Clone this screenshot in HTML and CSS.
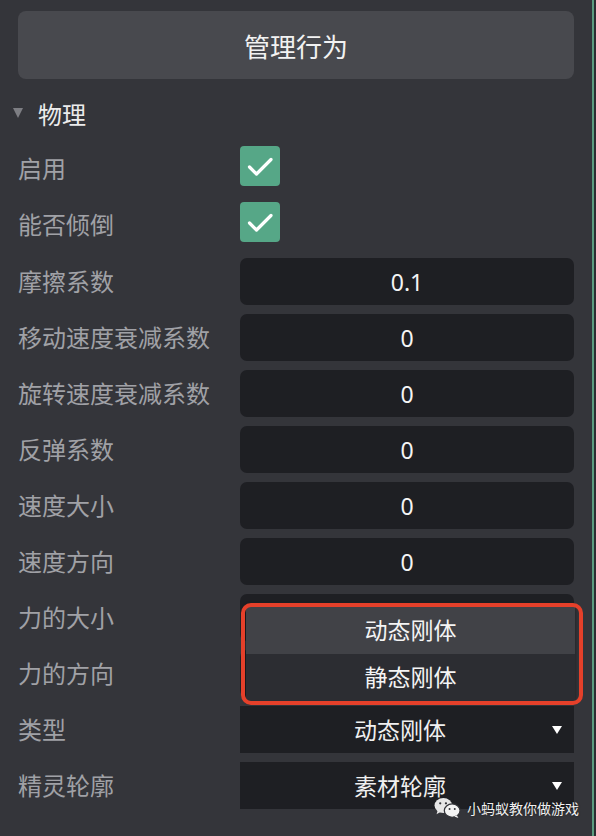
FILE: index.html
```html
<!DOCTYPE html>
<html lang="zh">
<head>
<meta charset="utf-8">
<link rel="stylesheet" href="styles.css">
</head>
<body>
<div class="frame">
  <div class="panel">
    <button class="manage">管理行为</button>
    <div class="section-head"><span class="caret"></span><span>物理</span></div>
    <div class="rows">
      <div class="row check-row"><div class="label">启用</div><div class="field"><span class="checkbox"><svg viewBox="0 0 40 40"><path d="M9.5 21 L16.5 28 L31 13.5"/></svg></span></div></div>
      <div class="row check-row"><div class="label">能否倾倒</div><div class="field"><span class="checkbox"><svg viewBox="0 0 40 40"><path d="M9.5 21 L16.5 28 L31 13.5"/></svg></span></div></div>
      <div class="row"><div class="label">摩擦系数</div><div class="field"><div class="input">0.1</div></div></div>
      <div class="row"><div class="label">移动速度衰减系数</div><div class="field"><div class="input">0</div></div></div>
      <div class="row"><div class="label">旋转速度衰减系数</div><div class="field"><div class="input">0</div></div></div>
      <div class="row"><div class="label">反弹系数</div><div class="field"><div class="input">0</div></div></div>
      <div class="row"><div class="label">速度大小</div><div class="field"><div class="input">0</div></div></div>
      <div class="row"><div class="label">速度方向</div><div class="field"><div class="input">0</div></div></div>
      <div class="row"><div class="label">力的大小</div><div class="field popup-anchor"><div class="input"></div>
        <div class="popup">
          <div class="option active">动态刚体</div>
          <div class="option">静态刚体</div>
        </div>
        <div class="annotation"></div>
      </div></div>
      <div class="row"><div class="label">力的方向</div><div class="field"><div class="input"></div></div></div>
      <div class="row"><div class="label">类型</div><div class="field"><div class="select"><span class="select-text">动态刚体</span><span class="arrow"></span></div></div></div>
      <div class="row"><div class="label">精灵轮廓</div><div class="field"><div class="select"><span class="select-text">素材轮廓</span><span class="arrow"></span></div></div></div>
    </div>
    <div class="watermark">
      <svg class="wx" viewBox="0 0 26 20">
        <ellipse cx="9" cy="8" rx="8.5" ry="7.2" fill="#e6e6e6"/>
        <path d="M3.5 13 L2.5 16.5 L6.5 14.2 Z" fill="#e6e6e6"/>
        <ellipse cx="17.5" cy="13" rx="7.6" ry="6.4" fill="#f4f4f4" stroke="#34353a" stroke-width="1.2"/>
        <path d="M22 17.5 L23.5 20 L19.5 18.6 Z" fill="#f4f4f4"/>
        <circle cx="6" cy="6" r="1.1" fill="#34353a"/>
        <circle cx="11.5" cy="6" r="1.1" fill="#34353a"/>
        <circle cx="15" cy="11.5" r="0.95" fill="#34353a"/>
        <circle cx="20" cy="11.5" r="0.95" fill="#34353a"/>
      </svg>
      <span>小蚂蚁教你做游戏</span>
    </div>
  </div>
  <div class="edge"></div>
</div>
</body>
</html>
```
FILE: styles.css
```css
* { box-sizing: border-box; }
html, body {
  margin: 0;
  padding: 0;
  background: #34353a;
}
body {
  width: 596px;
  height: 836px;
  overflow: hidden;
  font-family: "Noto Sans", "Noto Sans CJK SC", sans-serif;
}
.frame {
  display: flex;
  height: 836px;
}
.panel {
  position: relative;
  width: 592px;
  height: 836px;
  background: #34353a;
  padding: 11px 18px 0 18px;
}
.edge {
  width: 4px;
  height: 836px;
  border-left: 2px solid #5c9c7f;
  background: #2c2d31;
}
.manage {
  display: block;
  width: 556px;
  height: 68px;
  border: none;
  border-radius: 8px;
  background: #48494e;
  color: #f2f2f2;
  font-family: "Noto Sans CJK SC", sans-serif;
  font-size: 26px;
  padding: 0;
  margin: 0;
}
.section-head {
  display: flex;
  align-items: center;
  height: 34px;
  margin: 17px 0 16px -5px;
  color: #ececec;
  font-family: "Noto Sans CJK SC", sans-serif;
  font-size: 24px;
  gap: 15px;
}
.caret {
  width: 0;
  height: 0;
  border-left: 5px solid transparent;
  border-right: 5px solid transparent;
  border-top: 10px solid #7d7e83;
}
.rows {
  display: flex;
  flex-direction: column;
  gap: 9px;
}
.row {
  display: flex;
  align-items: center;
  height: 47px;
}
.check-row {
  height: 40px;
  margin-bottom: 7px;
}
.label {
  width: 222px;
  color: #a0a1a6;
  font-family: "Noto Sans CJK SC", sans-serif;
  font-size: 24px;
  white-space: nowrap;
  padding-bottom: 3px;
}
.check-row .label {
  padding-bottom: 0;
  padding-top: 3px;
}
.field {
  flex: 1;
  height: 100%;
  display: flex;
  align-items: center;
}
.checkbox {
  display: block;
  width: 40px;
  height: 40px;
  border-radius: 4px;
  background: #56a787;
}
.checkbox svg {
  display: block;
  width: 40px;
  height: 40px;
  fill: none;
  stroke: #ffffff;
  stroke-width: 3.2;
  stroke-linecap: round;
  stroke-linejoin: round;
}
.input {
  width: 334px;
  height: 47px;
  border-radius: 7px;
  background: #1e1f23;
  color: #f4f4f4;
  font-size: 23px;
  display: flex;
  align-items: center;
  justify-content: center;
}
.select {
  position: relative;
  width: 334px;
  height: 47px;
  background: #1e1f23;
  color: #f0f0f0;
  font-family: "Noto Sans CJK SC", sans-serif;
  font-size: 23px;
  display: flex;
  align-items: center;
  justify-content: center;
  padding-right: 14px;
  padding-bottom: 2px;
}
.arrow {
  position: absolute;
  right: 12px;
  top: 20px;
  width: 0;
  height: 0;
  border-left: 5px solid transparent;
  border-right: 5px solid transparent;
  border-top: 8px solid #ffffff;
}
.popup-anchor {
  position: relative;
}
.popup {
  position: absolute;
  left: 6px;
  top: 13px;
  width: 329px;
  height: 94px;
  display: flex;
  flex-direction: column;
  box-shadow: 0 0 4px rgba(0,0,0,0.5);
  z-index: 2;
}
.option {
  height: 47px;
  display: flex;
  align-items: center;
  justify-content: center;
  background: #2c2d32;
  color: #f4f4f4;
  font-family: "Noto Sans CJK SC", sans-serif;
  font-size: 23px;
  padding-bottom: 3px;
}
.option.active {
  background: #414247;
}
.annotation {
  position: absolute;
  left: 1px;
  top: 9px;
  width: 342px;
  height: 102px;
  border: 4px solid #e5402a;
  border-radius: 10px;
  z-index: 3;
}
.watermark {
  position: absolute;
  left: 434px;
  top: 797px;
  display: flex;
  align-items: center;
  gap: 6px;
  color: #f0f0f0;
  font-family: "Noto Sans CJK SC", sans-serif;
  font-size: 14px;
  text-shadow: 0 0 2px rgba(0,0,0,0.6);
}
.wx {
  width: 27px;
  height: 21px;
  display: block;
}
```
